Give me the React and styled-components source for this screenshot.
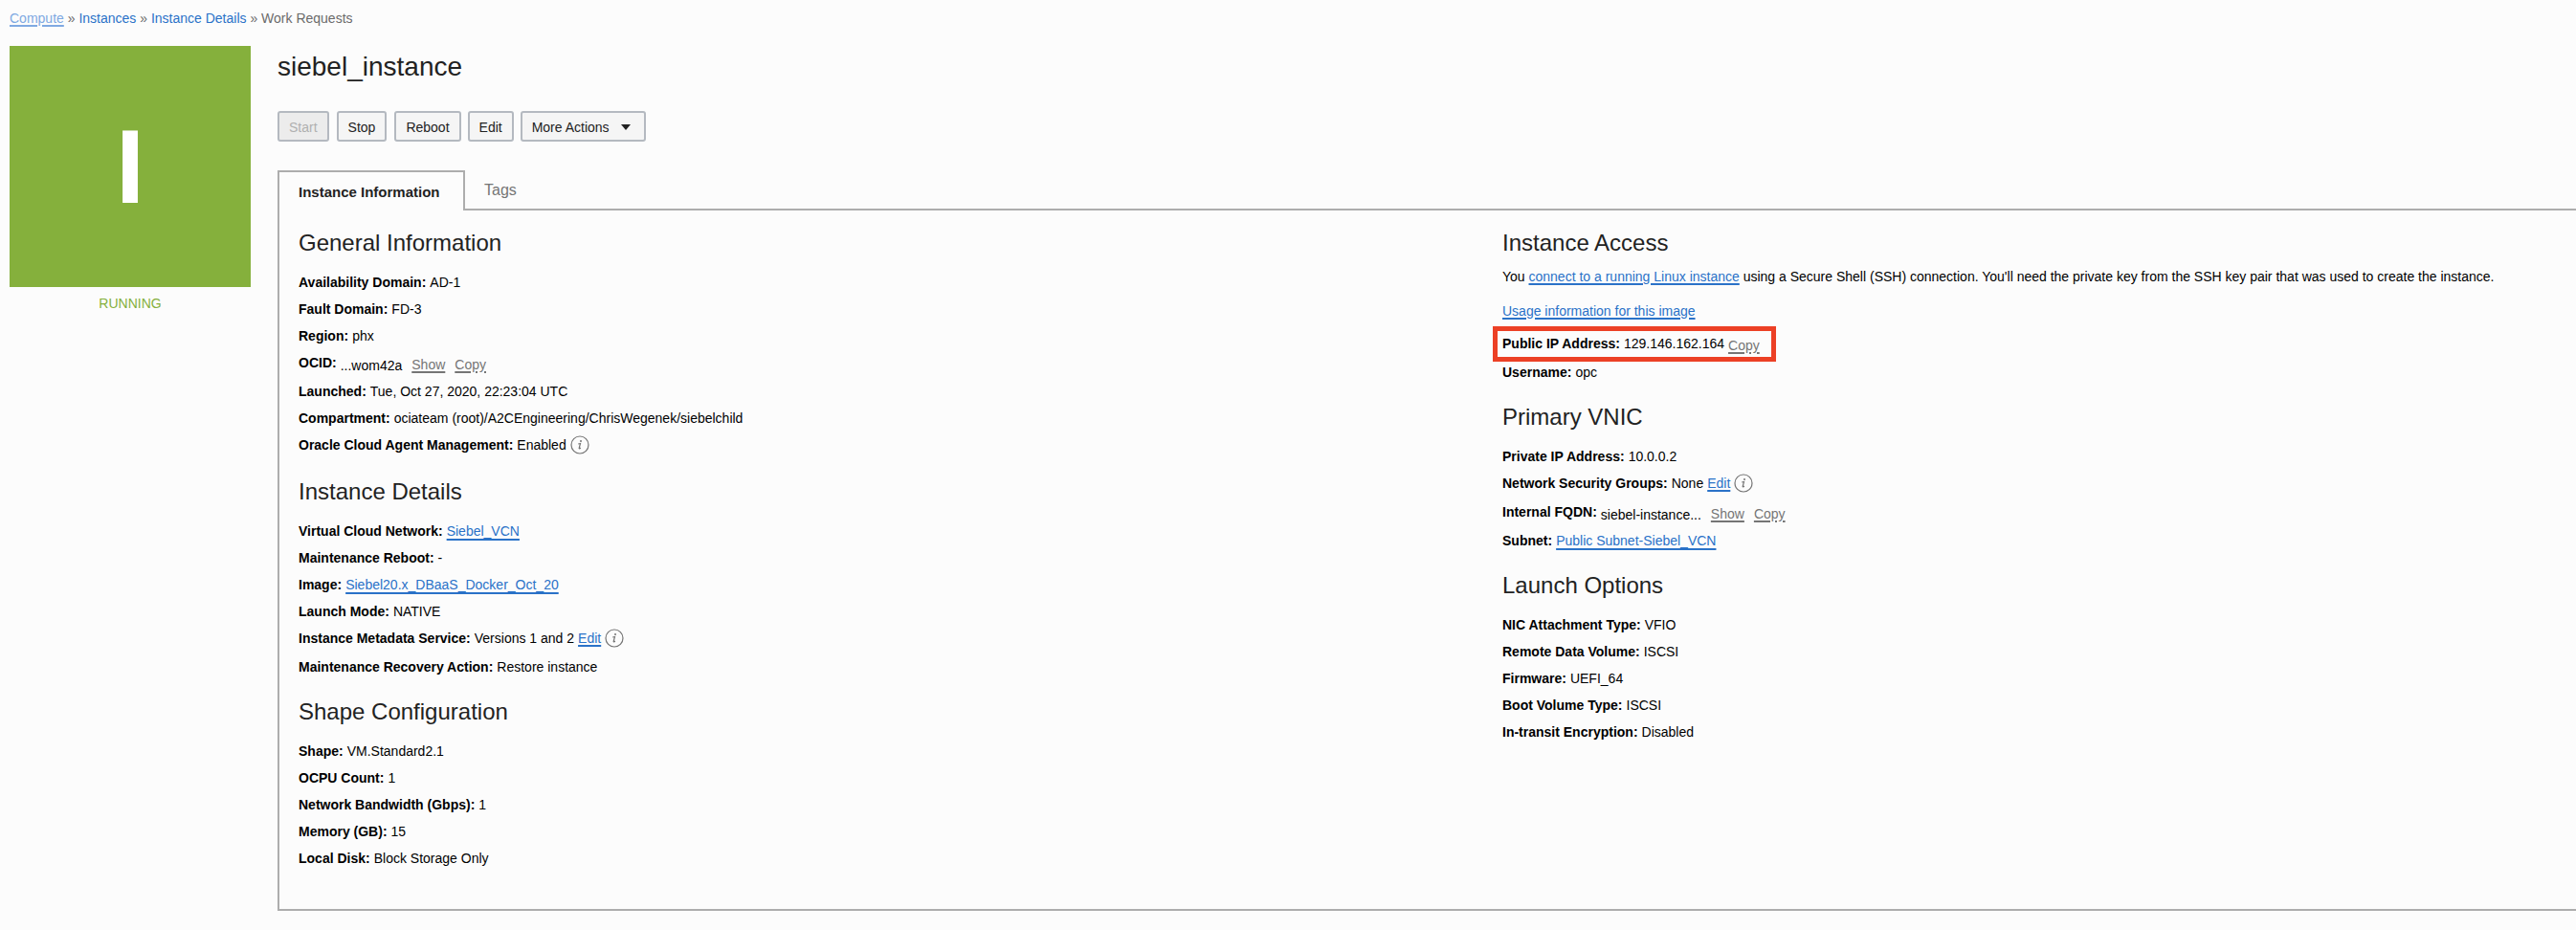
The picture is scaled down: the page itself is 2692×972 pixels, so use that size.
import React from "react";
import styled, { createGlobalStyle } from "styled-components";

const GlobalStyle = createGlobalStyle`
  * { box-sizing: border-box; }
  body {
    margin: 0;
    background: #fcfcfc;
    color: #000;
    font-family: "Liberation Sans", Arial, sans-serif;
    font-size: 14px;
    line-height: 20px;
    overflow-x: hidden;
  }
`;

const Page = styled.div`
  padding: 9px 0 20px 10px;
`;

const Breadcrumb = styled.nav`
  color: #6b6b6b;
  white-space: nowrap;
`;

const Crumb = styled.a`
  color: ${(p) => (p.$active ? "#7fa9e2" : "#2a72c8")};
  text-decoration: ${(p) => (p.$active ? "underline" : "none")};
  text-decoration-thickness: 2px;
  text-underline-offset: 2px;
`;

const Main = styled.div`
  display: flex;
  align-items: flex-start;
  gap: 28px;
  padding-top: 19px;
`;

const Status = styled.aside`
  flex: none;
  width: 252px;
  color: #85b03c;
  text-align: center;
`;

const StatusTile = styled.div`
  display: flex;
  align-items: center;
  justify-content: center;
  height: 252px;
  margin-bottom: 7px;
  background: #85b03c;
  color: #fff;
  font-size: 110px;
  font-weight: bold;
`;

const Content = styled.main`
  flex: 1;
  min-width: 0;
`;

const Title = styled.h1`
  margin: 6px 0 30px;
  color: #222;
  font-size: 28px;
  font-weight: normal;
  line-height: 32px;
`;

const Toolbar = styled.div`
  display: flex;
  gap: 8px;
`;

const ActionGroup = styled.div`
  display: flex;
  gap: 7px;
`;

const Button = styled.button`
  display: inline-flex;
  align-items: center;
  gap: 12px;
  height: 32px;
  padding: 2px ${(p) => (p.$menu ? "14px" : "10px")} 0 10px;
  border: 2px solid #b4b9c0;
  border-radius: 3px;
  background: #f5f5f5;
  color: #222;
  font: inherit;
  white-space: nowrap;

  &:disabled {
    background: #ececec;
    color: #b0b0b0;
  }
`;

const Tabs = styled.div`
  display: flex;
  margin-top: 30px;
`;

const Tab = styled.button`
  min-width: ${(p) => (p.$active ? "196px" : "0")};
  height: ${(p) => (p.$active ? "42px" : "40px")};
  margin-bottom: ${(p) => (p.$active ? "-2px" : "0")};
  padding: ${(p) => (p.$active ? "2px 20px 0" : "0 18px")};
  border: 2px solid ${(p) => (p.$active ? "#adadad" : "transparent")};
  border-bottom: 0;
  background: ${(p) => (p.$active ? "#fcfcfc" : "transparent")};
  color: ${(p) => (p.$active ? "#222" : "#757575")};
  font: inherit;
  font-size: ${(p) => (p.$active ? "15px" : "16px")};
  font-weight: ${(p) => (p.$active ? "bold" : "normal")};
  text-align: left;
  position: relative;
`;

const Panel = styled.div`
  display: grid;
  grid-template-columns: 37fr 33fr;
  padding: 18px 0 22px 20px;
  border: 2px solid #adadad;
  border-right: 0;
`;

const Section = styled.section`
  margin-bottom: 17px;
`;

const Heading = styled.h2`
  margin: 0 0 ${(p) => (p.$tight ? "9px" : "11px")};
  color: #222;
  font-size: 24px;
  font-weight: normal;
  line-height: 32px;
`;

const Rows = styled.dl`
  margin: 0;
`;

const Row = styled.div`
  display: flex;
  gap: 4px;
  height: ${(p) => (p.$tall ? "30px" : "28px")};
  padding-top: 4px;
  position: relative;
  white-space: nowrap;
`;

const Term = styled.dt`
  font-weight: bold;
`;

const Value = styled.dd`
  display: flex;
  gap: ${(p) => (p.$spaced ? "10px" : "4px")};
  margin: 0;
`;

const Lowered = styled.span`
  padding-top: 3px;
`;

const Link = styled.a`
  color: #2a72c8;
  text-decoration: underline;
  text-decoration-thickness: 2px;
  text-underline-offset: ${(p) => (p.$solid ? "3px" : "2px")};
  text-decoration-skip-ink: ${(p) => (p.$solid ? "none" : "auto")};
`;

const TextButton = styled.button`
  height: 20px;
  margin-top: 2px;
  padding: 0;
  border: 0;
  background: none;
  color: #757575;
  font: inherit;
  text-decoration: underline;
  text-decoration-thickness: 2px;
  text-underline-offset: 2px;
`;

const Paragraph = styled.p`
  margin: 0 0 ${(p) => (p.$close ? "10px" : "16px")};
`;

const Highlight = styled.span`
  position: absolute;
  top: -4px;
  left: -10px;
  width: 296px;
  height: 37px;
  border: 5px solid #ec4025;
  pointer-events: none;
`;

const InfoSvg = styled.svg`
  flex: none;
  display: block;
`;

const Caret = () => (
  <svg width="10" height="6" viewBox="0 0 10 6" aria-hidden="true">
    <path d="M0 0h10L5 6z" fill="#222" />
  </svg>
);

const Info = () => (
  <InfoSvg width="20" height="20" viewBox="0 0 20 20" aria-hidden="true">
    <circle cx="10" cy="10" r="9" fill="none" stroke="#757575" strokeWidth="1.2" />
    <circle cx="11" cy="6" r="1" fill="#757575" />
    <path d="M8.2 9l2.3-.5-1.3 4.8c-.2.9.6.8 1.6-.3" fill="none" stroke="#757575" strokeWidth="1.2" />
  </InfoSvg>
);

const Field = ({ label, tall, spaced, children }) => (
  <Row $tall={tall}>
    <Term>{label}:</Term>
    <Value $spaced={spaced}>{children}</Value>
  </Row>
);

export default function App() {
  return (
    <Page>
      <GlobalStyle />
      <Breadcrumb aria-label="Breadcrumb">
        <Crumb href="#compute" $active>Compute</Crumb> » <Crumb href="#instances">Instances</Crumb> »{" "}
        <Crumb href="#details">Instance Details</Crumb> » Work Requests
      </Breadcrumb>
      <Main>
        <Status>
          <StatusTile>I</StatusTile>
          RUNNING
        </Status>
        <Content>
          <Title>siebel_instance</Title>
          <Toolbar>
            <Button disabled>Start</Button>
            <Button>Stop</Button>
            <ActionGroup>
              <Button>Reboot</Button>
              <Button>Edit</Button>
              <Button $menu>More Actions <Caret /></Button>
            </ActionGroup>
          </Toolbar>
          <Tabs role="tablist">
            <Tab role="tab" aria-selected="true" $active>Instance Information</Tab>
            <Tab role="tab" aria-selected="false">Tags</Tab>
          </Tabs>
          <Panel role="tabpanel">
            <div>
              <Section>
                <Heading>General Information</Heading>
                <Rows>
                  <Field label="Availability Domain">AD-1</Field>
                  <Field label="Fault Domain">FD-3</Field>
                  <Field label="Region">phx</Field>
                  <Field label="OCID" tall spaced>
                    <Lowered>...wom42a</Lowered>
                    <TextButton>Show</TextButton>
                    <TextButton>Copy</TextButton>
                  </Field>
                  <Field label="Launched">Tue, Oct 27, 2020, 22:23:04 UTC</Field>
                  <Field label="Compartment">ociateam (root)/A2CEngineering/ChrisWegenek/siebelchild</Field>
                  <Field label="Oracle Cloud Agent Management" tall>Enabled <Info /></Field>
                </Rows>
              </Section>
              <Section>
                <Heading>Instance Details</Heading>
                <Rows>
                  <Field label="Virtual Cloud Network"><Link href="#vcn" $solid>Siebel_VCN</Link></Field>
                  <Field label="Maintenance Reboot">-</Field>
                  <Field label="Image"><Link href="#image" $solid>Siebel20.x_DBaaS_Docker_Oct_20</Link></Field>
                  <Field label="Launch Mode">NATIVE</Field>
                  <Field label="Instance Metadata Service" tall>
                    Versions 1 and 2 <Link href="#metadata">Edit</Link> <Info />
                  </Field>
                  <Field label="Maintenance Recovery Action">Restore instance</Field>
                </Rows>
              </Section>
              <Section>
                <Heading>Shape Configuration</Heading>
                <Rows>
                  <Field label="Shape">VM.Standard2.1</Field>
                  <Field label="OCPU Count">1</Field>
                  <Field label="Network Bandwidth (Gbps)">1</Field>
                  <Field label="Memory (GB)">15</Field>
                  <Field label="Local Disk">Block Storage Only</Field>
                </Rows>
              </Section>
            </div>
            <div>
              <Section>
                <Heading $tight>Instance Access</Heading>
                <Paragraph>
                  You <Link href="#connect">connect to a running Linux instance</Link> using a Secure Shell (SSH)
                  connection. You'll need the private key from the SSH key pair that was used to create the instance.
                </Paragraph>
                <Paragraph $close>
                  <Link href="#usage">Usage information for this image</Link>
                </Paragraph>
                <Rows>
                  <Field label="Public IP Address" tall>
                    129.146.162.164 <TextButton>Copy</TextButton>
                    <Highlight />
                  </Field>
                  <Field label="Username">opc</Field>
                </Rows>
              </Section>
              <Section>
                <Heading>Primary VNIC</Heading>
                <Rows>
                  <Field label="Private IP Address">10.0.0.2</Field>
                  <Field label="Network Security Groups" tall>
                    None <Link href="#nsg">Edit</Link> <Info />
                  </Field>
                  <Field label="Internal FQDN" tall spaced>
                    <Lowered>siebel-instance...</Lowered>
                    <TextButton>Show</TextButton>
                    <TextButton>Copy</TextButton>
                  </Field>
                  <Field label="Subnet"><Link href="#subnet" $solid>Public Subnet-Siebel_VCN</Link></Field>
                </Rows>
              </Section>
              <Section>
                <Heading>Launch Options</Heading>
                <Rows>
                  <Field label="NIC Attachment Type">VFIO</Field>
                  <Field label="Remote Data Volume">ISCSI</Field>
                  <Field label="Firmware">UEFI_64</Field>
                  <Field label="Boot Volume Type">ISCSI</Field>
                  <Field label="In-transit Encryption">Disabled</Field>
                </Rows>
              </Section>
            </div>
          </Panel>
        </Content>
      </Main>
    </Page>
  );
}
